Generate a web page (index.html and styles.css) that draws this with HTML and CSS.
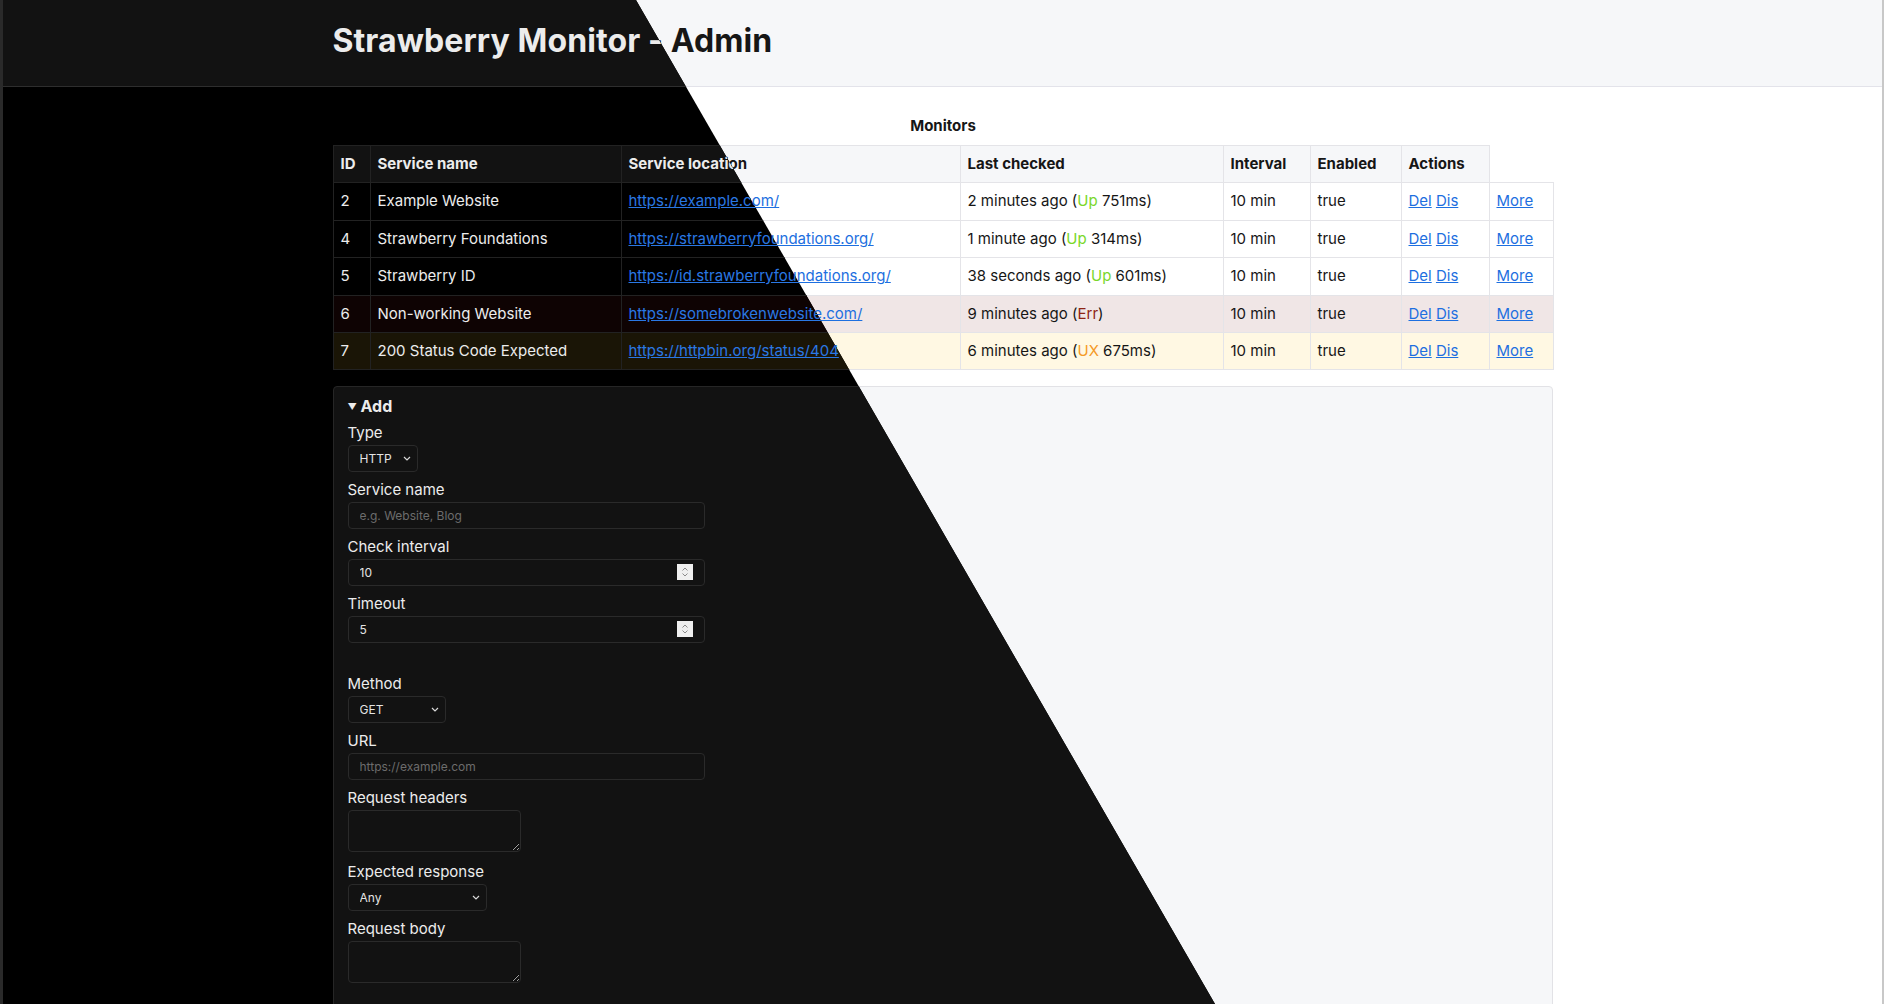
FILE: index.html
```html
<!DOCTYPE html>
<html lang="en">
<head>
<meta charset="utf-8">
<title>Strawberry Monitor - Admin</title>
<link rel="stylesheet" href="styles.css">
</head>
<body>
<div class="page light">
  <header class="topbar">
    <div class="wrap"><h1 class="title">Strawberry Monitor - Admin</h1></div>
  </header>
  <main class="wrap main">
    <table class="monitors">
      <caption>Monitors</caption>
      <colgroup>
        <col class="c-id"><col class="c-name"><col class="c-loc"><col class="c-last"><col class="c-int"><col class="c-en"><col class="c-act"><col class="c-more">
      </colgroup>
      <thead>
        <tr><th>ID</th><th>Service name</th><th>Service location</th><th>Last checked</th><th>Interval</th><th>Enabled</th><th>Actions</th></tr>
      </thead>
      <tbody>
        <tr><td>2</td><td>Example Website</td><td><a href="#">https://example.com/</a></td><td>2 minutes ago (<span class="up">Up</span> 751ms)</td><td>10 min</td><td>true</td><td><a href="#">Del</a> <a href="#">Dis</a></td><td><a href="#">More</a></td></tr>
        <tr><td>4</td><td>Strawberry Foundations</td><td><a href="#">https://strawberryfoundations.org/</a></td><td>1 minute ago (<span class="up">Up</span> 314ms)</td><td>10 min</td><td>true</td><td><a href="#">Del</a> <a href="#">Dis</a></td><td><a href="#">More</a></td></tr>
        <tr><td>5</td><td>Strawberry ID</td><td><a href="#">https://id.strawberryfoundations.org/</a></td><td>38 seconds ago (<span class="up">Up</span> 601ms)</td><td>10 min</td><td>true</td><td><a href="#">Del</a> <a href="#">Dis</a></td><td><a href="#">More</a></td></tr>
        <tr class="row-err"><td>6</td><td>Non-working Website</td><td><a href="#">https://somebrokenwebsite.com/</a></td><td>9 minutes ago (<span class="err">Err</span>)</td><td>10 min</td><td>true</td><td><a href="#">Del</a> <a href="#">Dis</a></td><td><a href="#">More</a></td></tr>
        <tr class="row-warn"><td>7</td><td>200 Status Code Expected</td><td><a href="#">https://httpbin.org/status/404</a></td><td>6 minutes ago (<span class="ux">UX</span> 675ms)</td><td>10 min</td><td>true</td><td><a href="#">Del</a> <a href="#">Dis</a></td><td><a href="#">More</a></td></tr>
      </tbody>
    </table>
    <details class="addbox" open>
      <summary>Add</summary>
      <form class="addform">
        <div class="field"><label class="lbl">Type</label><div class="selwrap sel-type"><select class="ctl sel"><option>HTTP</option></select><svg class="chev" width="8" height="5" viewBox="0 0 8 5"><path d="M1 1l3 3 3-3" fill="none" stroke="currentColor" stroke-width="1.2"/></svg></div></div>
        <div class="field"><label class="lbl">Service name</label><input class="ctl inp" type="text" placeholder="e.g. Website, Blog"></div>
        <div class="field"><label class="lbl">Check interval</label><div class="numwrap"><input class="ctl inp" type="number" value="10"><span class="spin"><svg width="16" height="16" viewBox="0 0 16 16"><path d="M5.5 6.5L8 4l2.5 2.5M5.5 9.5L8 12l2.5-2.5" fill="none" stroke="#8a8a8a" stroke-width="1"/></svg></span></div></div>
        <div class="field"><label class="lbl">Timeout</label><div class="numwrap"><input class="ctl inp" type="number" value="5"><span class="spin"><svg width="16" height="16" viewBox="0 0 16 16"><path d="M5.5 6.5L8 4l2.5 2.5M5.5 9.5L8 12l2.5-2.5" fill="none" stroke="#8a8a8a" stroke-width="1"/></svg></span></div></div>
        <div class="spacer"></div>
        <div class="field"><label class="lbl">Method</label><div class="selwrap sel-method"><select class="ctl sel"><option>GET</option></select><svg class="chev" width="8" height="5" viewBox="0 0 8 5"><path d="M1 1l3 3 3-3" fill="none" stroke="currentColor" stroke-width="1.2"/></svg></div></div>
        <div class="field"><label class="lbl">URL</label><input class="ctl inp" type="text" placeholder="https://example.com"></div>
        <div class="field"><label class="lbl">Request headers</label><textarea class="ctl area"></textarea></div>
        <div class="field"><label class="lbl">Expected response</label><div class="selwrap sel-resp"><select class="ctl sel"><option>Any</option></select><svg class="chev" width="8" height="5" viewBox="0 0 8 5"><path d="M1 1l3 3 3-3" fill="none" stroke="currentColor" stroke-width="1.2"/></svg></div></div>
        <div class="field"><label class="lbl">Request body</label><textarea class="ctl area"></textarea></div>
      </form>
    </details>
  </main>
</div>

<div class="page dark" aria-hidden="true">
  <header class="topbar">
    <div class="wrap"><h1 class="title">Strawberry Monitor - Admin</h1></div>
  </header>
  <main class="wrap main">
    <table class="monitors">
      <caption>Monitors</caption>
      <colgroup>
        <col class="c-id"><col class="c-name"><col class="c-loc"><col class="c-last"><col class="c-int"><col class="c-en"><col class="c-act"><col class="c-more">
      </colgroup>
      <thead>
        <tr><th>ID</th><th>Service name</th><th>Service location</th><th>Last checked</th><th>Interval</th><th>Enabled</th><th>Actions</th></tr>
      </thead>
      <tbody>
        <tr><td>2</td><td>Example Website</td><td><a href="#">https://example.com/</a></td><td>2 minutes ago (<span class="up">Up</span> 751ms)</td><td>10 min</td><td>true</td><td><a href="#">Del</a> <a href="#">Dis</a></td><td><a href="#">More</a></td></tr>
        <tr><td>4</td><td>Strawberry Foundations</td><td><a href="#">https://strawberryfoundations.org/</a></td><td>1 minute ago (<span class="up">Up</span> 314ms)</td><td>10 min</td><td>true</td><td><a href="#">Del</a> <a href="#">Dis</a></td><td><a href="#">More</a></td></tr>
        <tr><td>5</td><td>Strawberry ID</td><td><a href="#">https://id.strawberryfoundations.org/</a></td><td>38 seconds ago (<span class="up">Up</span> 601ms)</td><td>10 min</td><td>true</td><td><a href="#">Del</a> <a href="#">Dis</a></td><td><a href="#">More</a></td></tr>
        <tr class="row-err"><td>6</td><td>Non-working Website</td><td><a href="#">https://somebrokenwebsite.com/</a></td><td>9 minutes ago (<span class="err">Err</span>)</td><td>10 min</td><td>true</td><td><a href="#">Del</a> <a href="#">Dis</a></td><td><a href="#">More</a></td></tr>
        <tr class="row-warn"><td>7</td><td>200 Status Code Expected</td><td><a href="#">https://httpbin.org/status/404</a></td><td>6 minutes ago (<span class="ux">UX</span> 675ms)</td><td>10 min</td><td>true</td><td><a href="#">Del</a> <a href="#">Dis</a></td><td><a href="#">More</a></td></tr>
      </tbody>
    </table>
    <details class="addbox" open>
      <summary>Add</summary>
      <form class="addform">
        <div class="field"><label class="lbl">Type</label><div class="selwrap sel-type"><select class="ctl sel"><option>HTTP</option></select><svg class="chev" width="8" height="5" viewBox="0 0 8 5"><path d="M1 1l3 3 3-3" fill="none" stroke="currentColor" stroke-width="1.2"/></svg></div></div>
        <div class="field"><label class="lbl">Service name</label><input class="ctl inp" type="text" placeholder="e.g. Website, Blog"></div>
        <div class="field"><label class="lbl">Check interval</label><div class="numwrap"><input class="ctl inp" type="number" value="10"><span class="spin"><svg width="16" height="16" viewBox="0 0 16 16"><path d="M5.5 6.5L8 4l2.5 2.5M5.5 9.5L8 12l2.5-2.5" fill="none" stroke="#8a8a8a" stroke-width="1"/></svg></span></div></div>
        <div class="field"><label class="lbl">Timeout</label><div class="numwrap"><input class="ctl inp" type="number" value="5"><span class="spin"><svg width="16" height="16" viewBox="0 0 16 16"><path d="M5.5 6.5L8 4l2.5 2.5M5.5 9.5L8 12l2.5-2.5" fill="none" stroke="#8a8a8a" stroke-width="1"/></svg></span></div></div>
        <div class="spacer"></div>
        <div class="field"><label class="lbl">Method</label><div class="selwrap sel-method"><select class="ctl sel"><option>GET</option></select><svg class="chev" width="8" height="5" viewBox="0 0 8 5"><path d="M1 1l3 3 3-3" fill="none" stroke="currentColor" stroke-width="1.2"/></svg></div></div>
        <div class="field"><label class="lbl">URL</label><input class="ctl inp" type="text" placeholder="https://example.com"></div>
        <div class="field"><label class="lbl">Request headers</label><textarea class="ctl area"></textarea></div>
        <div class="field"><label class="lbl">Expected response</label><div class="selwrap sel-resp"><select class="ctl sel"><option>Any</option></select><svg class="chev" width="8" height="5" viewBox="0 0 8 5"><path d="M1 1l3 3 3-3" fill="none" stroke="currentColor" stroke-width="1.2"/></svg></div></div>
        <div class="field"><label class="lbl">Request body</label><textarea class="ctl area"></textarea></div>
      </form>
    </details>
  </main>
</div>
</body>
</html>
```

FILE: styles.css
```css
* { box-sizing: border-box; }

html, body {
  margin: 0;
  padding: 0;
  height: 100%;
  overflow: hidden;
  background: #fff;
}

body {
  font-family: Inter, "Noto Sans", "Liberation Sans", sans-serif;
  font-size: 15px;
  line-height: 18px;
  position: relative;
}

.page {
  min-height: 1004px;
  border-left: 3px solid #2a2a2a;
  border-right: 2px solid #c8c8c8;
  margin-right: 1px;
}

.light { background: #fff; color: #161616; }

.dark {
  position: absolute;
  top: 0;
  left: 0;
  right: 0;
  background: #000;
  color: #ececec;
  clip-path: polygon(0 0, 636px 0, 1215px 1004px, 0 1004px);
}

.wrap {
  width: 1220px;
  margin: 0 auto;
}

.topbar {
  height: 87px;
  padding-top: 21px;
  border-bottom: 1px solid #e3e3ea;
  background: #f6f7f9;
}
.dark .topbar { background: #121212; border-bottom-color: #2e2e2e; }

.title {
  margin: 0;
  font-size: 32px;
  line-height: 39px;
  font-weight: 700;
  letter-spacing: 0.1px;
}

.main { padding-top: 30px; }

.monitors {
  width: 1220px;
  table-layout: fixed;
  border-collapse: collapse;
}

.monitors caption {
  font-weight: 700;
  padding-bottom: 10px;
}

.c-id { width: 37px; }
.c-name { width: 251px; }
.c-loc { width: 339px; }
.c-last { width: 263px; }
.c-int { width: 87px; }
.c-en { width: 91px; }
.c-act { width: 88px; }
.c-more { width: 64px; }

.monitors th,
.monitors td {
  padding: 9px 7px;
  line-height: 18.4px;
  text-align: left;
  white-space: nowrap;
  border: 1px solid #e4e4e8;
}
.monitors th { font-weight: 700; background: #f6f7f9; }
.dark .monitors th { background: #121212; }
.dark .monitors th, .dark .monitors td { border-color: #222; }

.row-err td { background: #f0e6e6; }
.row-warn td { background: #fff8e3; }
.dark .row-err td { background: #0e0303; }
.dark .row-warn td { background: #1a1506; }

a { color: #1d6fe0; }
.dark a { color: #2a78e4; }

.up { color: #7ad72a; }
.err { color: #8e2414; }
.ux { color: #f59a26; }

.addbox {
  margin-top: 16px;
  border: 1px solid #e2e2e6;
  border-radius: 4px;
  background: #f6f7f9;
  padding: 9px 14px 40px;
}
.dark .addbox { background: #121212; border-color: #262626; }

.addbox summary {
  display: flex;
  align-items: center;
  height: 20px;
  font-size: 16px;
  line-height: 20px;
  font-weight: 700;
  margin-bottom: 8px;
  list-style: none;
  cursor: pointer;
}
.addbox summary::-webkit-details-marker { display: none; }
.addbox summary::before {
  content: "\25BC";
  font-size: 9px;
  line-height: 10px;
  width: 13px;
  margin-top: 1px;
}

.field { margin-bottom: 9px; }
.spacer { height: 23px; }

.lbl {
  display: block;
  line-height: 18px;
  margin-bottom: 3px;
}

.ctl {
  display: block;
  font-family: Inter, "Noto Sans", "Liberation Sans", sans-serif;
  font-size: 12px;
  height: 27px;
  border: 1px solid #d4d4d8;
  border-radius: 4px;
  background: #fff;
  color: #161616;
  padding: 0 11px;
}
.dark .ctl {
  background: #121212;
  border-color: #2a2a2a;
  color: #e4e4e4;
}
.ctl::placeholder { color: #8a8a8a; }
.dark .ctl::placeholder { color: #6c6c6c; }

.inp { width: 357px; }

.numwrap {
  position: relative;
  width: 357px;
}
.numwrap input::-webkit-inner-spin-button,
.numwrap input::-webkit-outer-spin-button { -webkit-appearance: none; margin: 0; }
.spin {
  position: absolute;
  top: 5px;
  right: 12px;
  width: 16px;
  height: 16px;
  background: #efefef;
  display: flex;
}

.selwrap { position: relative; }
.sel {
  -webkit-appearance: none;
  appearance: none;
  width: 100%;
  padding: 0 20px 0 11px;
}
.chev {
  position: absolute;
  right: 7px;
  top: 11px;
  color: #d8d8d8;
}
.light .chev { color: #333; }
.sel-type { width: 70px; }
.sel-method { width: 98px; }
.sel-resp { width: 139px; }

.area {
  width: 173px;
  height: 42px;
  padding: 6px 11px;
  margin-bottom: 11px;
  resize: both;
}
```
